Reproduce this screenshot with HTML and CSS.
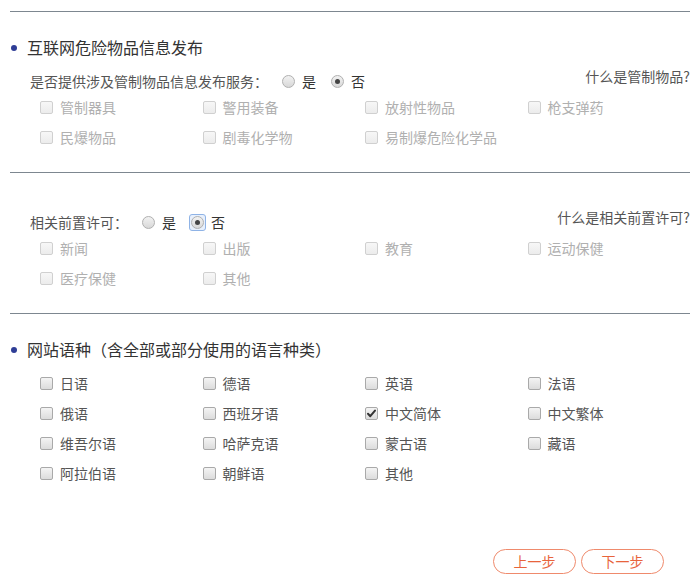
FILE: index.html
```html
<!DOCTYPE html>
<html lang="zh-CN">
<head>
<meta charset="utf-8">
<title>网站信息</title>
<link rel="stylesheet" href="styles.css">
</head>
<body>
<div class="page">
  <section class="sec sec-1">
    <h2 class="title"><span class="dot"></span>互联网危险物品信息发布</h2>
    <div class="qrow">
      <div class="q">
        <span class="qlabel">是否提供涉及管制物品信息发布服务：</span>
        <span class="radio"></span><span class="ropt">是</span>
        <span class="radio on"></span><span class="ropt">否</span>
      </div>
      <a class="link">什么是管制物品?</a>
    </div>
    <div class="grid disabled">
      <label class="item"><span class="cb"></span>管制器具</label>
      <label class="item"><span class="cb"></span>警用装备</label>
      <label class="item"><span class="cb"></span>放射性物品</label>
      <label class="item"><span class="cb"></span>枪支弹药</label>
      <label class="item"><span class="cb"></span>民爆物品</label>
      <label class="item"><span class="cb"></span>剧毒化学物</label>
      <label class="item"><span class="cb"></span>易制爆危险化学品</label>
    </div>
  </section>

  <section class="sec sec-2">
    <div class="qrow">
      <div class="q">
        <span class="qlabel">相关前置许可：</span>
        <span class="radio"></span><span class="ropt">是</span>
        <span class="focus"><span class="radio on"></span></span><span class="ropt">否</span>
      </div>
      <a class="link">什么是相关前置许可?</a>
    </div>
    <div class="grid disabled">
      <label class="item"><span class="cb"></span>新闻</label>
      <label class="item"><span class="cb"></span>出版</label>
      <label class="item"><span class="cb"></span>教育</label>
      <label class="item"><span class="cb"></span>运动保健</label>
      <label class="item"><span class="cb"></span>医疗保健</label>
      <label class="item"><span class="cb"></span>其他</label>
    </div>
  </section>

  <section class="sec sec-3">
    <h2 class="title"><span class="dot"></span>网站语种（含全部或部分使用的语言种类）</h2>
    <div class="grid lang">
      <label class="item"><span class="cb"></span>日语</label>
      <label class="item"><span class="cb"></span>德语</label>
      <label class="item"><span class="cb"></span>英语</label>
      <label class="item"><span class="cb"></span>法语</label>
      <label class="item"><span class="cb"></span>俄语</label>
      <label class="item"><span class="cb"></span>西班牙语</label>
      <label class="item"><span class="cb checked"><svg viewBox="0 0 13 13" width="13" height="13"><path d="M3 6.8 L5.3 9.2 L10 3.6" fill="none" stroke="#333" stroke-width="2" stroke-linecap="round" stroke-linejoin="round"/></svg></span>中文简体</label>
      <label class="item"><span class="cb"></span>中文繁体</label>
      <label class="item"><span class="cb"></span>维吾尔语</label>
      <label class="item"><span class="cb"></span>哈萨克语</label>
      <label class="item"><span class="cb"></span>蒙古语</label>
      <label class="item"><span class="cb"></span>藏语</label>
      <label class="item"><span class="cb"></span>阿拉伯语</label>
      <label class="item"><span class="cb"></span>朝鲜语</label>
      <label class="item"><span class="cb"></span>其他</label>
    </div>
    <div class="actions">
      <button class="btn">上一步</button>
      <button class="btn">下一步</button>
    </div>
  </section>
</div>
</body>
</html>
```

FILE: styles.css
```css
html, body {
  margin: 0;
  padding: 0;
  background: #fff;
}
body {
  font-family: "Noto Sans CJK SC", "Microsoft YaHei", sans-serif;
  font-size: 14px;
  color: #555;
}
.page {
  padding: 11px 10px 0 10px;
}
.sec {
  border-top: 1px solid #7d8790;
}
.sec-1 {
  padding: 23px 0 20px 0;
}
.sec-2 {
  padding: 38px 0 20px 0;
}
.sec-3 {
  padding: 23px 0 0 0;
}
.title {
  margin: 0;
  font-size: 16px;
  font-weight: normal;
  line-height: 24px;
  height: 24px;
  color: #333;
  display: flex;
  align-items: center;
}
.dot {
  width: 6px;
  height: 6px;
  border-radius: 50%;
  background: #2f3d96;
  margin: 1px 10px 0 1px;
}
.sec-1 .qrow {
  margin-top: 11px;
}
.qrow {
  display: flex;
  justify-content: space-between;
  align-items: center;
  height: 22px;
  padding-left: 20px;
}
.q {
  display: flex;
  align-items: center;
  line-height: 22px;
}
.qlabel {
  color: #555;
  margin-right: 14px;
}
.ropt {
  color: #333;
  margin: 0 15px 0 7px;
}
.radio {
  display: inline-block;
  width: 11px;
  height: 11px;
  border: 1px solid #b0b0b0;
  border-radius: 50%;
  background: linear-gradient(#f2f2f2, #d8d8d8);
  position: relative;
  box-sizing: content-box;
}
.radio.on::after {
  content: "";
  position: absolute;
  left: 3px;
  top: 3px;
  width: 5px;
  height: 5px;
  border-radius: 50%;
  background: #444;
}
.focus {
  display: inline-flex;
  padding: 1px;
  border: 1px solid #8fb3e6;
  border-radius: 3px;
  margin: -2px;
  background: #e8f0fc;
}
.link {
  color: #555;
  text-decoration: none;
  align-self: flex-start;
  margin-top: -5px;
  line-height: 22px;
}
.grid {
  display: grid;
  grid-template-columns: repeat(4, 162.5px);
  padding-left: 30px;
}
.lang {
  margin-top: 7px;
}
.item {
  display: flex;
  align-items: center;
  height: 30px;
  color: #555;
}
.disabled .item {
  color: #b0b0b0;
}
.cb {
  display: inline-block;
  box-sizing: border-box;
  width: 13px;
  height: 13px;
  border: 1px solid #a9a9a9;
  border-radius: 2px;
  background: linear-gradient(#f4f4f4, #dcdcdc);
  margin: 0 7px 0 0;
  position: relative;
}
.disabled .cb {
  border-color: #d0d0d0;
  background: linear-gradient(#f7f7f7, #ececec);
}
.cb svg {
  position: absolute;
  left: -1px;
  top: -1px;
}
.actions {
  display: flex;
  justify-content: flex-end;
  gap: 5px;
  margin-top: 61px;
  padding-right: 26px;
}
.btn {
  width: 83px;
  height: 25px;
  border: 1px solid #ef8a6c;
  border-radius: 13px;
  background: #fff;
  color: #e8643c;
  font-family: "Noto Sans CJK SC", "Microsoft YaHei", sans-serif;
  font-size: 14px;
  line-height: 23px;
  padding: 0;
}
```
